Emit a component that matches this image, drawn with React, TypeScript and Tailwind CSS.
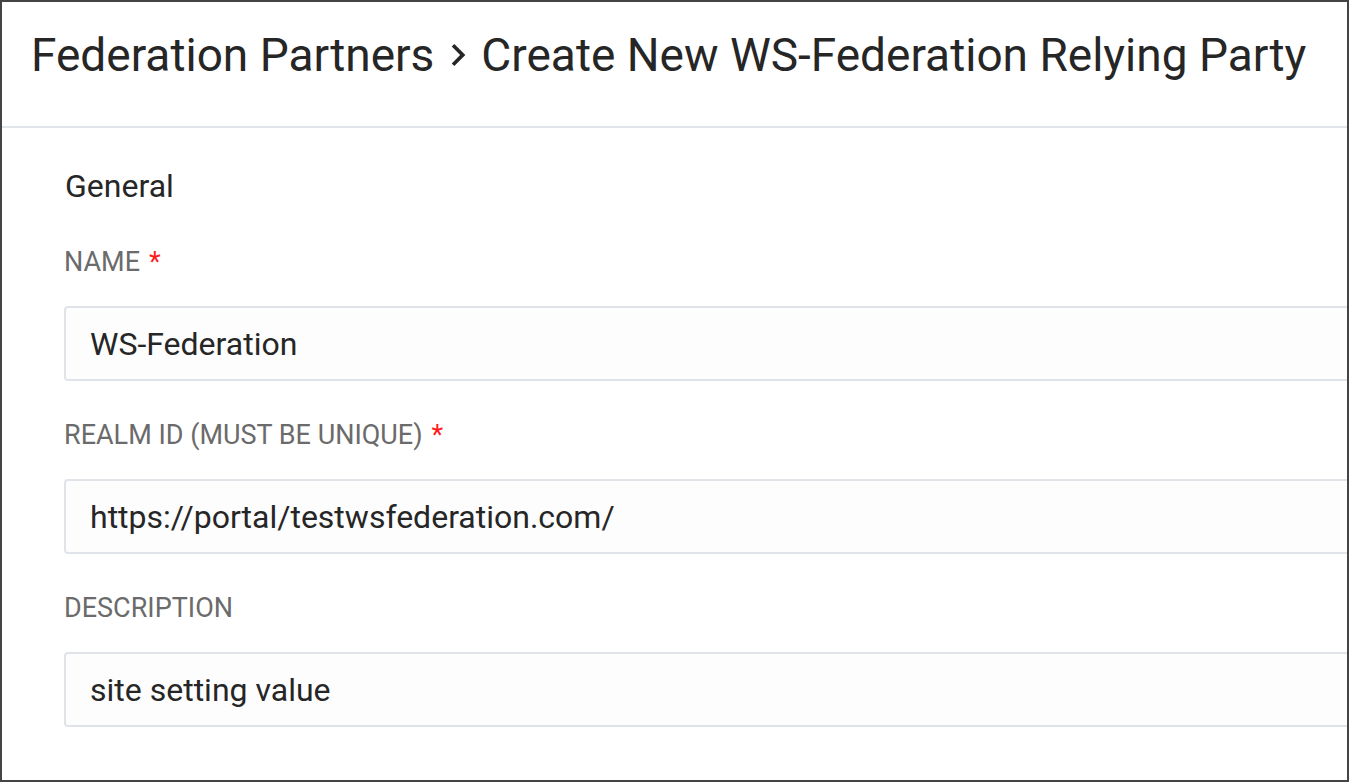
import React from "react";

function Chevron() {
  return (
    <svg width="44" height="44" viewBox="0 0 24 24" className="shrink-0 ml-[2px] mr-[1px]" fill="#262626">
      <path d="M10 6 8.59 7.41 13.17 12l-4.58 4.59L10 18l6-6z" />
    </svg>
  );
}

function Field({ label, required, value }: { label: string; required?: boolean; value: string }) {
  return (
    <div className="flex flex-col">
      <div className="text-[27px] leading-none text-[#6b6b6b] h-[27px] whitespace-nowrap">
        {label}
        {required && <span className="text-[#ff1a1a] ml-[9px]">*</span>}
      </div>
      <div className="mt-[30px] w-[1320px] h-[75px] border-2 border-[#e0e4e8] rounded-[4px] bg-[#fdfdfd] flex items-center pl-[24px] text-[32px] text-[#262626]">
        {value}
      </div>
    </div>
  );
}

export default function App() {
  return (
    <div className="w-[1349px] h-[782px] border-2 border-[#444444] bg-white overflow-hidden font-['Roboto',sans-serif]">
      <div className="h-[126px] border-b-2 border-[#e1e5e9] flex items-start pt-[30px] pl-[29px] whitespace-nowrap">
        <div className="flex items-center text-[46px] leading-none text-[#262626]">
          <span>Federation Partners</span>
          <Chevron />
          <span>Create New WS-Federation Relying Party</span>
        </div>
      </div>
      <div className="pl-[62px] pt-[42px] flex flex-col">
        <div className="text-[32px] leading-none text-[#262626] h-[32px] pl-[1px]">General</div>
        <div className="mt-[47px] flex flex-col gap-[41px]">
          <Field label="NAME" required value="WS-Federation" />
          <Field label="REALM ID (MUST BE UNIQUE)" required value="https://portal/testwsfederation.com/" />
          <Field label="DESCRIPTION" value="site setting value" />
        </div>
      </div>
    </div>
  );
}
